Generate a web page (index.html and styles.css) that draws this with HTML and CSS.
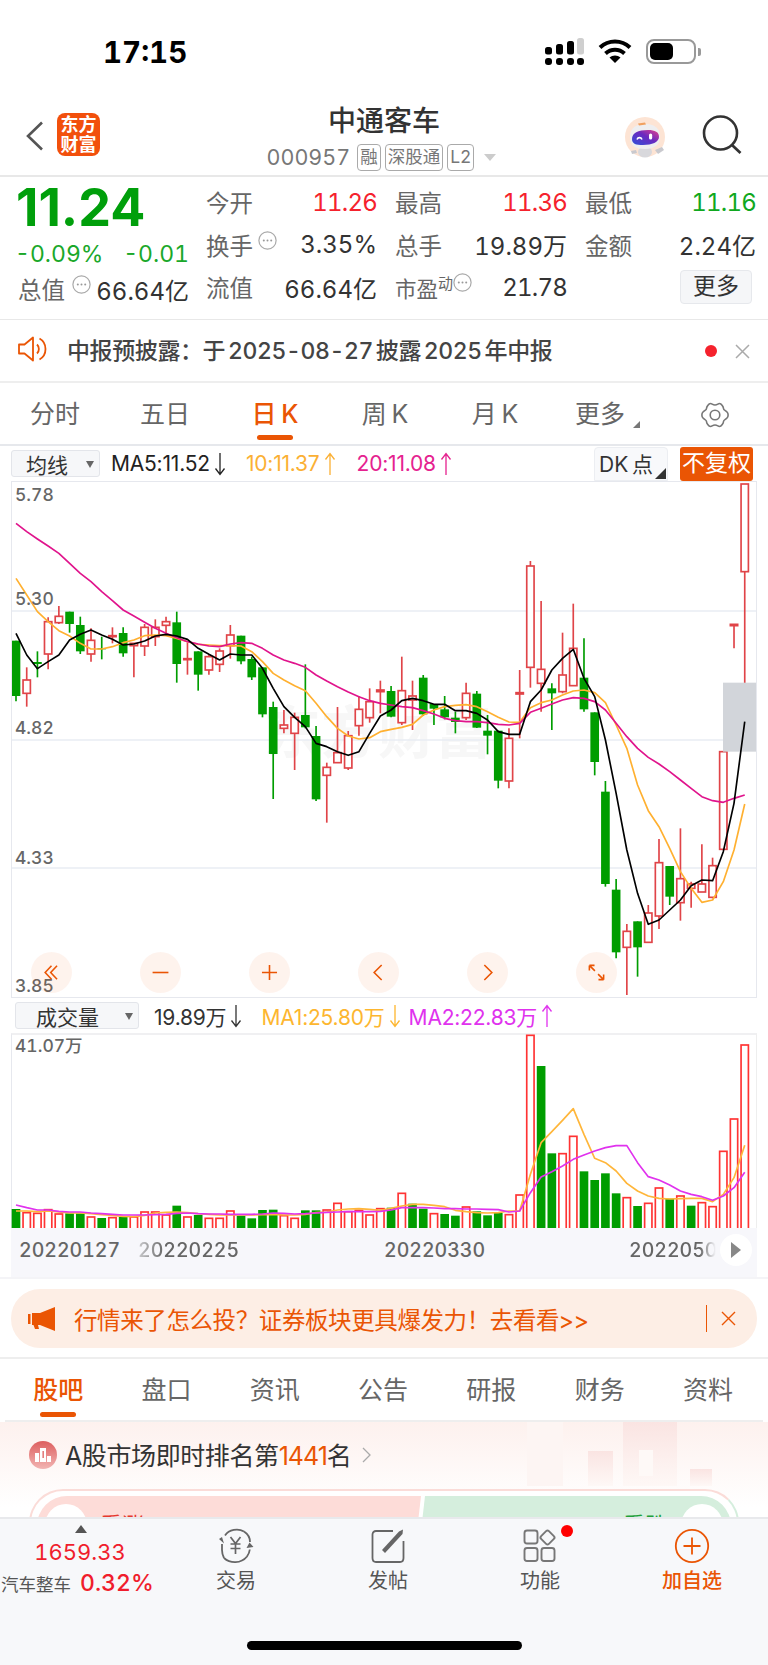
FILE: index.html
```html
<!DOCTYPE html>
<html>
<head>
	<meta charset="utf-8">
	<title>中通客车</title>
	<link rel="stylesheet" href="styles.css">
</head>
<body>
	<svg class="defs" width="0" height="0">
		<symbol id="more" viewBox="0 0 19 19">
			<circle cx="9.5" cy="9.5" r="8.6" fill="none" stroke="#a9a9a9" stroke-width="1.2"/>
			<circle cx="5.8" cy="9.5" r="1" fill="#999"/>
			<circle cx="9.5" cy="9.5" r="1" fill="#999"/>
			<circle cx="13.2" cy="9.5" r="1" fill="#999"/>
		</symbol>
		<symbol id="down" viewBox="0 0 14 24">
			<path d="M7 1V22M2.500 16.500L7 22.500L11.500 16.500" fill="none" stroke="currentColor" stroke-width="1.300"/>
		</symbol>
		<symbol id="up" viewBox="0 0 14 24">
			<path d="M7 23V2M2.500 7.500L7 1.500L11.500 7.500" fill="none" stroke="currentColor" stroke-width="1.300"/>
		</symbol>
	</svg>

	<div id="status">
		<div class="time">17:15</div>
		<div class="status-icons">
			<svg class="signal" width="40" height="28" viewBox="0 0 40 28">
				<rect x="0" y="20" width="7" height="7" rx="3"/>
				<rect x="11" y="20" width="7" height="7" rx="3"/>
				<rect x="22" y="20" width="7" height="7" rx="3"/>
				<rect x="32" y="20" width="7" height="7" rx="3"/>
				<rect x="0" y="9" width="7" height="7.5" rx="2.5"/>
				<rect x="11" y="6" width="7" height="10.5" rx="2.5"/>
				<rect x="22" y="3" width="7" height="13.5" rx="2.5"/>
				<rect x="32" y="0" width="7" height="16.5" rx="2.5" fill="#cfcfcf"/>
			</svg>
			<svg class="wifi" width="34" height="24" viewBox="0 0 34 24">
				<path d="M2 8.5C10.500 0.500 23.500 0.500 32 8.500M7.500 14.500C13 9.500 21 9.500 26.500 14.500" fill="none" stroke="#000" stroke-width="4"/>
				<path d="M11.500 18.500C14.500 15.800 19.500 15.800 22.500 18.500L17 24Z"/>
			</svg>
			<div class="battery"><div class="battery-fill"></div></div>
			<div class="battery-cap"></div>
		</div>
	</div>

	<div id="nav">
		<svg class="back" width="19" height="30" viewBox="0 0 19 30">
			<path d="M17 1.500L3 15L17 28.500" fill="none" stroke="#555" stroke-width="2.600"/>
		</svg>
		<div class="logo">东方<br>财富</div>
		<div class="title">
			<h1>中通客车</h1>
			<div class="code">
				<span>000957</span>
				<i class="tag">融</i>
				<i class="tag">深股通</i>
				<i class="tag">L2</i>
				<b class="caret"></b>
			</div>
		</div>
		<svg class="robot" width="42" height="42" viewBox="0 0 42 42">
			<defs>
				<linearGradient id="visor" x1="0" x2="1" y1="1" y2="0">
					<stop offset="0" stop-color="#2f4fd8"/>
					<stop offset="0.55" stop-color="#6a2ac0"/>
					<stop offset="1" stop-color="#e8408a"/>
				</linearGradient>
			</defs>
			<circle cx="21" cy="20" r="20" fill="#fde4d4"/>
			<ellipse cx="21" cy="35" rx="7" ry="5.500" fill="#d8d8dc"/>
			<path d="M31 33l7-3 2 3-6 4zM12 33l-5 1 1 3 5-1z" fill="#c9c9ce"/>
			<path d="M6 20C6 10 13 7 22 7C31 7 36 12 36 20C36 28 30 32 21 32C12 32 6 29 6 20Z" fill="#eeeef0"/>
			<path d="M14 6.500l7-1 1 2-7 1z" fill="#f0a060"/>
			<path d="M8 22C8 16 14 13 24 13C31 13 35 15 35 20C35 25 28 28 19 28C12 28 8 27 8 22Z" fill="url(#visor)"/>
			<path d="M13 22.500c1-2.500 4-2.500 5 0" fill="none" stroke="#fff" stroke-width="1.600"/>
			<rect x="25" y="16.500" width="3.200" height="6" rx="1.600" fill="#fff"/>
		</svg>
		<svg class="search" width="40" height="40" viewBox="0 0 40 40">
			<circle cx="18.500" cy="18" r="16.500" fill="none" stroke="#333" stroke-width="2.600"/>
			<path d="M30 30L38.500 38" stroke="#333" stroke-width="2.800"/>
		</svg>
	</div>

	<div id="quote">
		<div class="quote-main">
			<div class="price">11.24</div>
			<div class="change"><span class="pct">-0.09%</span><span>-0.01</span></div>
			<div class="cap">
				<span class="label">总值</span>
				<svg class="more"><use href="#more"/></svg>
				<span class="value">66.64亿</span>
			</div>
		</div>
		<div class="quote-grid">
			<div class="cell"><span class="label">今开</span><span class="up">11.26</span></div>
			<div class="cell"><span class="label">最高</span><span class="up">11.36</span></div>
			<div class="cell"><span class="label">最低</span><span class="down">11.16</span></div>
			<div class="cell"><span class="label">换手<svg class="more raised"><use href="#more"/></svg></span><span class="value">3.35%</span></div>
			<div class="cell"><span class="label">总手</span><span class="value">19.89万</span></div>
			<div class="cell"><span class="label">金额</span><span class="value">2.24亿</span></div>
			<div class="cell"><span class="label">流值</span><span class="value">66.64亿</span></div>
			<div class="cell"><span class="label pe">市盈<sup>动</sup><svg class="more raised"><use href="#more"/></svg></span><span class="value tight">21.78</span></div>
			<div class="cell cell-end"><div class="more-btn">更多</div></div>
		</div>
	</div>

	<div id="notice">
		<svg class="speaker" width="30" height="26" viewBox="0 0 30 26">
			<path d="M1 8.500H6.500L15 1.500V24.500L6.500 17.500H1Z" fill="none" stroke="#ea5504" stroke-width="1.800" stroke-linejoin="round"/>
			<path d="M19 8.500C21.500 11 21.500 15 19 17.500M21.500 2.500C29.500 7 29.500 19 21.500 23.500" fill="none" stroke="#ea5504" stroke-width="1.800"/>
		</svg>
		<div class="notice-text">中报预披露：于 2025-08-27 披露 2025 年中报</div>
		<b class="notice-dot"></b>
		<svg class="notice-close" width="15" height="15" viewBox="0 0 15 15">
			<path d="M1 1L14 14M14 1L1 14" stroke="#aaa" stroke-width="1.500"/>
		</svg>
	</div>

	<div id="period">
		<div class="tab">分时</div>
		<div class="tab">五日</div>
		<div class="tab active">日 K</div>
		<div class="tab">周 K</div>
		<div class="tab">月 K</div>
		<div class="tab corner">更多</div>
		<div class="tab">
			<svg class="gear" width="30" height="26" viewBox="0 0 30 26">
				<path d="M10.500 1.500C12 1.500 12.500 3 15 3C17.500 3 18 1.500 19.500 1.500C21.500 1.500 23.500 5 23.500 6.500C23.500 8 25.500 8.500 27 10C28.500 11.500 28.500 14.500 27 16C25.500 17.500 23.500 18 23.500 19.500C23.500 21 21.500 24.500 19.500 24.500C18 24.500 17.500 23 15 23C12.500 23 12 24.500 10.500 24.500C8.500 24.500 6.500 21 6.500 19.500C6.500 18 4.500 17.500 3 16C1.500 14.500 1.500 11.500 3 10C4.500 8.500 6.500 8 6.500 6.500C6.500 5 8.500 1.500 10.500 1.500Z" fill="none" stroke="#777" stroke-width="1.600"/>
				<circle cx="15" cy="13" r="4.800" fill="none" stroke="#777" stroke-width="1.600"/>
			</svg>
		</div>
	</div>

	<div id="ma-row">
		<div class="select ma-select">均线<b class="select-caret"></b></div>
		<div class="ma ma5">MA5:11.52<svg class="arrow"><use href="#down"/></svg></div>
		<div class="ma ma10">10:11.37<svg class="arrow"><use href="#up"/></svg></div>
		<div class="ma ma20">20:11.08<svg class="arrow"><use href="#up"/></svg></div>
		<div class="dk">DK 点</div>
		<div class="adjust">不复权</div>
	</div>

	<div id="kline" class="panel">
		<div class="watermark">东方财富</div>
		<svg id="kline-svg" viewBox="36 6 2232 1545"></svg>
		<span class="axis-y" data-y="13">5.78</span>
		<span class="axis-y" data-y="117">5.30</span>
		<span class="axis-y" data-y="246">4.82</span>
		<span class="axis-y" data-y="376">4.33</span>
		<span class="axis-y" data-y="504">3.85</span>
		<div class="tools">
			<div class="tool"><svg viewBox="0 0 24 24"><path d="M12 3.500L4 12L12 20.500M19 3.500L11 12L19 20.500"/></svg></div>
			<div class="tool"><svg viewBox="0 0 24 24"><path d="M2 12H22"/></svg></div>
			<div class="tool"><svg viewBox="0 0 24 24"><path d="M2.500 12H21.500M12 2.500V21.500"/></svg></div>
			<div class="tool"><svg viewBox="0 0 24 24"><path d="M16 2.500L6.500 12L16 21.500"/></svg></div>
			<div class="tool"><svg viewBox="0 0 24 24"><path d="M8 2.500L17.500 12L8 21.500"/></svg></div>
			<div class="tool"><svg viewBox="0 0 24 24"><path d="M3 3L10 10M3 3V9.500M3 3H9.500M21 21L14 14M21 21V14.500M21 21H14.500"/></svg></div>
		</div>
	</div>

	<div id="vol-row">
		<div class="select vol-select">成交量<b class="select-caret"></b></div>
		<div class="ma vol">19.89万<svg class="arrow"><use href="#down"/></svg></div>
		<div class="ma vol1">MA1:25.80万<svg class="arrow"><use href="#down"/></svg></div>
		<div class="ma vol2">MA2:22.83万<svg class="arrow"><use href="#up"/></svg></div>
	</div>

	<div id="volume" class="panel">
		<svg id="vol-svg" viewBox="36 72 2232 579"></svg>
		<span class="axis-y vol-max">41.07万</span>
	</div>
	<div id="dates">
		<span class="date d1">20220127</span>
		<span class="date d2">20220225</span>
		<span class="date d3">20220330</span>
		<span class="date d4">20220505</span>
		<div class="next"><b></b></div>
	</div>

	<div id="banner">
		<div class="pill">
			<svg class="horn" width="28" height="24" viewBox="0 0 28 24">
				<rect x="0" y="7" width="2.500" height="10" fill="#ea5504"/>
				<path d="M4 6H12L27 0V24L12 18H10L11 22H7L5.500 18H4Z" fill="#ea5504"/>
			</svg>
			<div class="pill-text">行情来了怎么投？证券板块更具爆发力！去看看&gt;&gt;</div>
			<i class="pill-bar"></i>
			<svg class="pill-close" width="15" height="15" viewBox="0 0 15 15">
				<path d="M1 1L14 14M14 1L1 14" stroke="#ea5504" stroke-width="1.400"/>
			</svg>
		</div>
	</div>

	<div id="info-tabs">
		<div class="info-tab active">股吧</div>
		<div class="info-tab">盘口</div>
		<div class="info-tab">资讯</div>
		<div class="info-tab">公告</div>
		<div class="info-tab">研报</div>
		<div class="info-tab">财务</div>
		<div class="info-tab">资料</div>
	</div>

	<div id="rank">
		<svg class="rank-bg" width="220" height="64" viewBox="0 0 220 64">
			<defs>
				<linearGradient id="fade" x1="0" x2="0" y1="0" y2="1">
					<stop offset="0" stop-color="#fae4e2"/>
					<stop offset="1" stop-color="#fef8f6"/>
				</linearGradient>
			</defs>
			<rect x="0" y="0" width="36" height="64" fill="#fdf5f3"/>
			<rect x="61" y="29" width="25" height="35" fill="url(#fade)"/>
			<rect x="96" y="0" width="54" height="64" fill="url(#fade)"/>
			<rect x="112" y="28" width="14" height="26" fill="#fef9f7"/>
			<rect x="163" y="47" width="22" height="17" fill="url(#fade)"/>
		</svg>
		<div class="rank-head">
			<svg class="rank-icon" width="28" height="28" viewBox="0 0 28 28">
				<defs>
					<linearGradient id="medal" x1="0" x2="0" y1="0" y2="1">
						<stop offset="0" stop-color="#dd5f5f"/>
						<stop offset="1" stop-color="#f2b5b3"/>
					</linearGradient>
				</defs>
				<circle cx="14" cy="14" r="14" fill="url(#medal)"/>
				<path d="M11 7h6v14h-6zM6 12h4v9H6zM18 15h4v6h-4z" fill="#fff"/>
				<path d="M13.500 10h1.300v7h-1.300z" fill="#dd5f5f"/>
			</svg>
			<div class="rank-text">A股市场即时排名第<em>1441</em>名</div>
			<svg class="rank-go" width="9" height="16" viewBox="0 0 9 16">
				<path d="M1 1L8 8L1 15" fill="none" stroke="#aaa" stroke-width="1.300"/>
			</svg>
		</div>
		<div class="vote">
			<div class="vote-side vote-up"><i></i><span>看涨</span></div>
			<div class="vote-side vote-down"><span>看跌</span><i></i></div>
		</div>
	</div>

	<div id="dock">
		<div class="dock-row">
			<div class="sector">
				<b class="sector-caret"></b>
				<div class="sector-index">1659.33</div>
				<div class="sector-line"><span>汽车整车</span><strong>0.32%</strong></div>
			</div>
			<div class="dock-item">
				<svg width="40" height="36" viewBox="0 0 40 36">
					<path d="M28 3.500C22 0 13 1.500 9 7.500M8 30C14 35.500 25 36 31 28.500C32.500 26.500 33.500 24 33.800 21.500" fill="none" stroke="#666" stroke-width="1.800"/>
					<path d="M28 3.500C32 6 34 10 34 14" fill="none" stroke="#666" stroke-width="1.800"/>
					<path d="M3 11L8 15.500L6 9ZM37.500 19L33.500 14.500L30.500 20Z" fill="#666"/>
					<path d="M6 16V22C6 25 7 28 8 30" fill="none" stroke="#666" stroke-width="1.800"/>
					<path d="M14.500 9L19.500 15.500L24.500 9M19.500 15.500V26M14.500 16H24.500M14.500 20.500H24.500" fill="none" stroke="#666" stroke-width="1.700"/>
				</svg>
				<span>交易</span>
			</div>
			<div class="dock-item">
				<svg width="36" height="36" viewBox="0 0 36 36">
					<path d="M23 3H6C4 3 2.500 4.500 2.500 6.500V30C2.500 32.500 4 34 6 34H30C32 34 33.500 32.500 33.500 30V13" fill="none" stroke="#666" stroke-width="1.800"/>
					<path d="M12 22L29 3.500L33 1.500L32.500 6L15 25Z" fill="#666"/>
				</svg>
				<span>发帖</span>
			</div>
			<div class="dock-item">
				<svg width="36" height="36" viewBox="0 0 36 36">
					<rect x="2.500" y="2.500" width="13" height="13" rx="2.500" fill="none" stroke="#777" stroke-width="1.900"/>
					<rect x="20" y="4" width="11" height="11" rx="2" transform="rotate(45 25.500 9.500)" fill="none" stroke="#777" stroke-width="1.900"/>
					<rect x="2.500" y="20" width="13" height="13" rx="2.500" fill="none" stroke="#777" stroke-width="1.900"/>
					<rect x="19.500" y="20" width="13" height="13" rx="2.500" fill="none" stroke="#777" stroke-width="1.900"/>
				</svg>
				<b class="dock-dot"></b>
				<span>功能</span>
			</div>
			<div class="dock-item dock-add">
				<svg width="36" height="36" viewBox="0 0 36 36">
					<circle cx="18" cy="18" r="16.200" fill="none" stroke="#ea5504" stroke-width="1.800"/>
					<path d="M9.500 18H26.500M18 9.500V26.500" stroke="#ea5504" stroke-width="1.800"/>
				</svg>
				<span>加自选</span>
			</div>
		</div>
		<div class="home-bar"></div>
	</div>

	<script src="chart.js"></script>
</body>
</html>
```

FILE: styles.css
```css
* {
	box-sizing: border-box;
}

html, body {
	margin: 0;
	padding: 0;
	background: #fff;
}

body {
	width: 768px;
	height: 1665px;
	overflow: hidden;
	font-family: Inter, 'Noto Sans CJK SC', sans-serif;
	font-variant-numeric: tabular-nums;
	color: #333;
}

.defs {
	position: absolute;
}

/* status bar */
#status {
	height: 100px;
	display: flex;
	padding: 38px 0 0 103px;
}
.time {
	width: 82px;
	font-size: 29.500px;
	font-weight: 700;
	line-height: 29px;
	color: #000;
	white-space: nowrap;
}
.status-icons {
	display: flex;
	align-items: flex-start;
	margin-left: 360px;
}
.wifi {
	margin: 1px 0 0 13px;
}
.battery {
	width: 50px;
	height: 25px;
	margin: 1px 0 0 14px;
	border: 2px solid #999;
	border-radius: 8px;
	padding: 2px;
}
.battery-fill {
	width: 23px;
	height: 17px;
	background: #000;
	border-radius: 5px;
}
.battery-cap {
	width: 3px;
	height: 8px;
	margin: 10px 0 0 2px;
	background: #999;
	border-radius: 0 2px 2px 0;
}

/* nav */
#nav {
	height: 77px;
	position: relative;
	display: flex;
	border-bottom: 2px solid #e8e8e8;
	padding-left: 25px;
}
.back {
	margin-top: 21px;
}
.logo {
	width: 43px;
	height: 43px;
	margin: 13px 0 0 13px;
	background: #f2500c;
	border-radius: 8px;
	color: #fff;
	font-size: 18px;
	font-weight: 700;
	line-height: 20px;
	text-align: center;
	padding-top: 2px;
	white-space: nowrap;
}
.title {
	position: absolute;
	left: 0;
	right: 0;
	top: 5px;
	text-align: center;
}
.title h1 {
	margin: 0;
	font-size: 28px;
	font-weight: 500;
	line-height: 32px;
	color: #333;
}
.code {
	display: flex;
	align-items: center;
	justify-content: center;
	height: 28px;
	margin-top: 6px;
	color: #777;
	font-size: 21.500px;
	padding-right: 5px;
}
.tag {
	font-style: normal;
	font-size: 17.500px;
	line-height: 24px;
	height: 27px;
	padding: 0 2px;
	margin-left: 4px;
	border: 1px solid #aaa;
	border-radius: 4px;
	color: #777;
}
.code span {
	margin-right: 3px;
}
.caret {
	width: 0;
	height: 0;
	margin-left: 10px;
	border-left: 6px solid transparent;
	border-right: 6px solid transparent;
	border-top: 7px solid #ccc;
}
.robot {
	position: absolute;
	left: 624px;
	top: 17px;
}
.search {
	position: absolute;
	left: 702px;
	top: 15px;
}

/* quote */
#quote {
	height: 143px;
	display: flex;
	border-bottom: 1px solid #e8e8e8;
	padding: 3px 0 0 18px;
}
.quote-main {
	width: 171px;
	margin-right: 17px;
}
.price {
	height: 59px;
	margin-left: -2px;
	font-size: 52px;
	font-weight: 700;
	line-height: 55px;
	color: #009f0b;
	font-variant-numeric: normal;
}
.change {
	display: flex;
	justify-content: space-between;
	height: 30px;
	font-size: 23px;
	line-height: 30px;
	color: #1aa82a;
}
.pct {
	margin-left: -3px;
}
.cap {
	display: flex;
	align-items: center;
	height: 40px;
}
.cap .value {
	margin-left: auto;
}
.label {
	color: #666;
	font-size: 23.500px;
	white-space: nowrap;
}
.value {
	color: #333;
	font-size: 24px;
	white-space: nowrap;
}
.tight {
	letter-spacing: -0.8px;
}
.more {
	width: 19px;
	height: 19px;
	margin: -10px 0 0 7px;
}
.more.raised {
	vertical-align: 5px;
	margin: 0 0 0 5px;
}
.quote-grid {
	display: grid;
	grid-template-columns: 171px 172px 171px;
	grid-auto-rows: 42.500px;
	column-gap: 18px;
	margin-top: 1px;
}
.cell {
	display: flex;
	align-items: center;
	justify-content: space-between;
	font-size: 24px;
}
.cell-end {
	justify-content: flex-end;
	padding-right: 4px;
}
.up {
	color: #f5222d;
	letter-spacing: -0.8px;
}
.down {
	color: #10a820;
	letter-spacing: -0.8px;
}
.pe {
	font-size: 21.500px;
}
.pe sup {
	font-size: 15px;
	line-height: 0;
}
.pe .more.raised {
	margin-left: 0;
}
.more-btn {
	width: 72px;
	height: 34px;
	line-height: 31px;
	text-align: center;
	background: #f5f6f8;
	border: 1px solid #e6e8ec;
	border-radius: 4px;
	font-size: 23px;
	color: #333;
}

/* notice */
#notice {
	height: 63px;
	display: flex;
	align-items: center;
	padding: 0 0 3px 18px;
	border-bottom: 2px solid #eeeeee;
}
.notice-text {
	margin-left: 19px;
	font-size: 23px;
	font-weight: 500;
	color: #444;
	white-space: nowrap;
	letter-spacing: -0.4px;
	word-spacing: -3px;
}
.notice-dot {
	position: absolute;
	left: 705px;
	top: 345px;
	width: 12px;
	height: 12px;
	background: #f5222d;
	border-radius: 50%;
}
.notice-close {
	position: absolute;
	left: 735px;
	top: 344px;
}

/* period tabs */
#period {
	height: 63px;
	display: grid;
	grid-template-columns: repeat(7, 110px);
	border-bottom: 2px solid #e6e8ec;
}
.tab {
	position: relative;
	text-align: center;
	font-size: 25px;
	line-height: 63px;
	color: #666;
	white-space: nowrap;
	word-spacing: -2px;
}
.tab.active {
	color: #ea5504;
	font-weight: 500;
}
.tab.active::after {
	content: '';
	position: absolute;
	left: 37px;
	top: 52px;
	width: 36px;
	height: 5px;
	background: #ea5504;
	border-radius: 3px;
}
.tab.corner {
	padding-right: 10px;
}
.tab.corner::after {
	content: '';
	position: absolute;
	left: 83px;
	top: 38px;
	border-left: 7px solid transparent;
	border-bottom: 7px solid #777;
}
.gear {
	margin-top: 19px;
	vertical-align: top;
}

/* MA legends */
#ma-row, #vol-row {
	height: 35px;
	position: relative;
	display: flex;
	align-items: center;
	font-size: 21px;
}
.ma {
	display: flex;
	align-items: center;
	white-space: nowrap;
	letter-spacing: -0.2px;
	font-variant-numeric: normal;
}
.arrow {
	width: 14px;
	height: 24px;
	margin-left: 3px;
}
.select {
	position: relative;
	display: flex;
	align-items: center;
	padding-left: 14px;
	height: 27px;
	background: #f6f7f9;
	border: 1px solid #e3e5ea;
	border-radius: 3px;
	color: #333;
	font-size: 21px;
}
.ma-select {
	width: 89px;
	margin-left: 11px;
}
.vol-select {
	width: 124px;
	margin-left: 15px;
	padding-left: 20px;
}
.select-caret {
	position: absolute;
	right: 5px;
	top: 10px;
	border-left: 4px solid transparent;
	border-right: 4px solid transparent;
	border-top: 7px solid #666;
}
.ma5 {
	margin-left: 11px;
	color: #222;
}
.ma10 {
	margin-left: 19px;
	color: #fbb034;
}
.ma20 {
	margin-left: 20px;
	color: #e5228f;
}
.dk {
	position: absolute;
	left: 594px;
	top: 1px;
	width: 74px;
	height: 34px;
	padding-left: 4px;
	line-height: 33px;
	border: 1px solid #eceef2;
	border-radius: 4px 4px 0 0;
	background: #f8f9fb;
	white-space: nowrap;
	color: #333;
	word-spacing: -2px;
}
.dk::after {
	content: '';
	position: absolute;
	right: 1px;
	bottom: 1px;
	border-left: 11px solid transparent;
	border-bottom: 11px solid #333;
}
.adjust {
	position: absolute;
	left: 680px;
	top: 1px;
	width: 73px;
	height: 34px;
	line-height: 33px;
	text-align: center;
	background: #ea5504;
	border-radius: 3px;
	color: #fff;
	white-space: nowrap;
	font-size: 23px;
}

/* chart panels */
.panel {
	position: relative;
	width: 746px;
	margin-left: 11px;
	background: #fff;
}
#kline {
	height: 517px;
	border: 1px solid #e6e8ee;
}
#kline-svg {
	position: absolute;
	left: 0;
	top: 0;
	width: 744px;
	height: 515px;
}
.watermark {
	position: absolute;
	left: 252px;
	top: 216px;
	font-size: 57px;
	font-weight: 700;
	line-height: 70px;
	color: #f7f7f7;
	white-space: nowrap;
}
.axis-y {
	position: absolute;
	left: 3px;
	font-size: 17.500px;
	line-height: 20px;
	color: #666;
	font-weight: 500;
}
.tools {
	position: absolute;
	left: 19px;
	top: 470px;
	display: flex;
	gap: 68px;
}
.tool {
	display: flex;
	align-items: center;
	justify-content: center;
	width: 41px;
	height: 41px;
	border-radius: 50%;
	background: rgba(234, 85, 4, 0.07);
}
.tool svg {
	width: 19px;
	height: 19px;
	fill: none;
	stroke: #ea5504;
	stroke-width: 2;
}
.vol {
	margin-left: 15px;
	color: #333;
}
.vol1 {
	margin-left: 18px;
	color: #fdb62f;
}
.vol2 {
	margin-left: 7px;
	color: #e032ee;
}
#volume {
	height: 195px;
	border-top: 2px solid #f0f0f2;
	border-left: 1px solid #e6e8ee;
	border-right: 1px solid #eeeeee;
}
#vol-svg {
	position: absolute;
	left: 0;
	top: 0;
	width: 744px;
	height: 193px;
	overflow: visible;
}
.vol-max {
	top: 0;
	line-height: 22px;
}
#dates {
	position: relative;
	width: 746px;
	height: 49px;
	margin-left: 11px;
	background: #f7f7fb;
}
.date {
	position: absolute;
	top: 11px;
	font-size: 19.500px;
	font-weight: 500;
	line-height: 22px;
	color: #666;
}
.d1 {
	left: 8px;
}
.d2 {
	left: 127px;
	-webkit-mask-image: linear-gradient(to right, rgba(0, 0, 0, 0.3), #000 26%);
	mask-image: linear-gradient(to right, rgba(0, 0, 0, 0.3), #000 26%);
}
.d3 {
	left: 373px;
}
.d4 {
	left: 618px;
	-webkit-mask-image: linear-gradient(to right, #000 70%, transparent 86%);
	mask-image: linear-gradient(to right, #000 70%, transparent 86%);
}
.next {
	position: absolute;
	left: 709px;
	top: 6px;
	width: 32px;
	height: 32px;
	background: #fff;
	border-radius: 50%;
}
.next b {
	position: absolute;
	left: 11px;
	top: 8px;
	border-top: 8px solid transparent;
	border-bottom: 8px solid transparent;
	border-left: 10px solid #888;
}

/* banner */
#banner {
	height: 82px;
	padding: 10px 11px 0;
	border-top: 2px solid #f4f4f7;
	border-bottom: 2px solid #eeeeee;
}
.pill {
	position: relative;
	display: flex;
	align-items: center;
	height: 59px;
	padding-left: 17px;
	background: #fdeee5;
	border-radius: 29px;
}
.pill-text {
	margin-left: 18px;
	font-size: 23.500px;
	color: #ea5504;
	white-space: nowrap;
	letter-spacing: -0.4px;
}
.pill-bar {
	position: absolute;
	left: 695px;
	top: 16px;
	width: 1px;
	height: 27px;
	background: #ea5504;
}
.pill-close {
	position: absolute;
	left: 710px;
	top: 22px;
}

/* info tabs */
#info-tabs {
	height: 63px;
	display: flex;
	padding-left: 4px;
	position: relative;
}
#info-tabs::after {
	content: '';
	position: absolute;
	left: 5px;
	right: 5px;
	bottom: 0;
	height: 2px;
	background: #eeeeee;
}
.info-tab {
	position: relative;
	width: 108.300px;
	text-align: center;
	font-size: 25px;
	line-height: 63px;
	color: #666;
}
.info-tab.active {
	color: #ea5504;
	font-weight: 500;
}
.info-tab.active::after {
	content: '';
	position: absolute;
	left: 36px;
	top: 53px;
	width: 36px;
	height: 5px;
	background: #ea5504;
	border-radius: 3px;
}

/* rank */
#rank {
	position: relative;
	height: 95px;
	overflow: hidden;
	padding: 19px 29px 0;
	background: linear-gradient(#fdf1ee, #fff 90%);
}
.rank-bg {
	position: absolute;
	left: 527px;
	top: 0;
}
.rank-head {
	position: relative;
	display: flex;
	align-items: center;
	height: 28px;
}
.rank-text {
	margin-top: -3px;
	margin-left: 8px;
	font-size: 25px;
	white-space: nowrap;
	color: #333;
	letter-spacing: -0.4px;
}
.rank-text em {
	font-style: normal;
	font-variant-numeric: normal;
	letter-spacing: -1px;
	color: #ea5504;
}
.rank-go {
	margin-left: 11px;
}
.vote {
	position: relative;
	display: flex;
	height: 80px;
	margin-top: 20px;
	padding: 5px 6px;
	background: #fff;
	border: 2px solid #fbdcd8;
	border-right-color: #d5eedd;
	border-radius: 34px;
}
.vote-side {
	display: flex;
	height: 70px;
	padding: 8px 16px;
	font-size: 22px;
	line-height: 30px;
}
.vote-side i {
	width: 42px;
	height: 42px;
	background: #fff;
	border-radius: 50%;
}
.vote-side span {
	margin-top: 6px;
}
.vote-up {
	width: 384px;
	background: #fddcd8;
	border-radius: 30px 0 0 30px;
	clip-path: polygon(0 0, 100% 0, calc(100% - 8px) 100%, 0 100%);
	color: #e53a2f;
	gap: 13px;
	padding-left: 8px;
}
.vote-down {
	flex: 1;
	margin-left: -4px;
	justify-content: flex-end;
	background: #d5eedd;
	border-radius: 0 30px 30px 0;
	clip-path: polygon(8px 0, 100% 0, 100% 100%, 0 100%);
	color: #22a03a;
	gap: 14px;
	padding-right: 8px;
}

/* dock */
#dock {
	height: 148px;
	background: #f7f8fa;
	border-top: 2px solid #e8e9ec;
}
.dock-row {
	display: flex;
	height: 122px;
}
.sector {
	position: relative;
	width: 160px;
	padding-top: 6px;
	text-align: center;
}
.sector-caret {
	display: block;
	width: 0;
	margin: 0 0 0 75px;
	border-left: 6px solid transparent;
	border-right: 6px solid transparent;
	border-bottom: 8px solid #555;
}
.sector-index {
	margin-top: 4px;
	width: 160px;
	font-size: 22px;
	line-height: 30px;
	color: #f01d2c;
}
.sector-line {
	display: flex;
	align-items: center;
	height: 32px;
	margin-left: 1px;
	white-space: nowrap;
}
.sector-line span {
	font-size: 17.500px;
	color: #555;
}
.sector-line strong {
	margin-left: 9px;
	font-size: 23px;
	font-weight: 500;
	color: #f01d2c;
}
.dock-item {
	position: relative;
	width: 152px;
	padding-top: 9px;
	text-align: center;
}
.dock-item svg {
	display: block;
	margin: 0 auto;
}
.dock-item span {
	display: block;
	margin-top: 3px;
	font-size: 20px;
	line-height: 28px;
	color: #555;
}
.dock-dot {
	position: absolute;
	left: 97px;
	top: 6px;
	width: 12px;
	height: 12px;
	background: #f00;
	border-radius: 50%;
}
.dock-add span {
	color: #ea5504;
	font-weight: 500;
}
.home-bar {
	width: 275px;
	height: 9px;
	margin: 0 0 0 247px;
	background: #000;
	border-radius: 5px;
}
```

FILE: chart.js
```js
// all y values below are in 3x chart units (1px = 3 units)
var STEP = 32.15;
var NS = 'http://www.w3.org/2000/svg';

function xAt(i) {
	return 48 + STEP * i;
}

// colour, high, body top, body bottom, low
var candles = [
	['g',482,482,648,664],['r',562,600,640,680],['g',514,546,552,592],['r',412,425,522,568],['r',378,409,428,432],
	['g',395,395,432,458],['g',410,435,514,522],['r',445,481,522,545],['g',470,505,508,538],['r',442,467,470,490],
	['g',442,459,520,530],['r',490,490,497,592],['r',432,442,498,528],['r',418,442,470,498],['r',410,425,436,460],
	['g',395,427,552,608],['r',488,536,539,584],['g',514,514,584,632],['r',525,530,570,584],['r',505,513,553,576],
	['r',435,465,497,536],['g',467,467,544,553],['g',530,537,592,600],['g',562,562,703,712],['g',665,681,822,957],
	['r',690,735,745,760],['r',698,712,760,870],['g',553,705,742,745],['g',738,768,958,963],['r',848,862,886,1028],
	['r',681,818,848,848],['r',753,767,864,870],['r',648,688,737,767],['r',625,665,713,728],['r',602,630,635,700],
	['g',618,633,710,712],['r',530,632,728,735],['r',602,648,660,750],['g',585,593,703,708],['g',672,672,686,735],
	['g',648,688,712,718],['g',695,713,726,760],['r',608,640,713,720],['g',633,641,743,744],['g',705,752,767,823],
	['g',752,752,902,925],['r',745,775,903,925],['r',570,638,642,775],['r',243,258,562,623],['r',363,568,610,695],
	['g',610,625,640,750],['r',458,585,635,640],['r',371,505,617,617],['g',475,593,688,695],['g',697,697,846,886],
	['g',903,935,1212,1220],['g',1197,1229,1417,1435],['r',1332,1354,1402,1545],['g',1324,1324,1402,1490],['r',1275,1299,1387,1387],
	['r',1077,1148,1308,1347],['g',1158,1158,1250,1275],['r',1045,1196,1268,1322],['r',1205,1212,1225,1283],['r',1093,1212,1236,1236],
	['r',1133,1157,1252,1255],['r',815,815,1108,1108],['r',433,433,437,505],['r',12,12,275,700]
];

var ma5 = [460,525,566,545,525,480,463,450,465,478,495,492,483,468,463,468,478,505,523,540,522,525,525,565,625,680,712,740,790,800,815,826,815,760,708,690,662,655,662,673,673,692,692,700,720,755,763,763,665,630,570,535,508,595,650,780,940,1110,1240,1333,1320,1290,1260,1217,1200,1202,1115,970,725];
var ma10 = [295,345,395,425,452,468,490,507,507,500,488,480,467,465,467,475,485,493,495,497,497,498,515,545,580,600,617,632,670,710,745,768,777,773,755,748,742,733,705,690,680,676,674,680,695,712,726,727,683,668,660,645,633,630,638,668,735,805,915,992,1040,1105,1175,1225,1267,1260,1205,1110,972];
var ma20 = [130,155,177,198,220,250,280,305,335,362,390,408,427,445,460,473,485,492,498,500,492,488,490,505,525,540,550,562,585,603,620,636,650,662,670,675,680,683,692,702,715,722,725,725,728,733,735,730,697,685,672,660,653,655,665,690,730,770,805,832,852,875,900,925,950,962,967,955,945];

// colour + bar top, bottoms all sit on 654
var bars = [
	'g594','r605','r607','r596','r609','g607','g607','r618','g621','r620','g618','r618','r603','r603','r612','g584','r618','g612','r622','r622',
	'r600','g614','g622','g597','g596','r614','r622','g598','g598','r597','r577','r602','r598','r612','r593','g590','r547','g578','g593','r608',
	'g609','g614','r588','g601','g613','g606','r611','r552','r73','g165','g427','r428','r376','g481','g507','g487','g547','r560','g585','r577',
	'r531','g563','r555','g584','r575','r587','r421','r324','r102'
];
var vol1 = [600,600,602,600,603,606,606,608,611,613,616,617,613,606,604,603,605,608,610,612,612,612,612,611,610,612,612,610,605,603,597,594,593,595,598,592,585,580,580,583,587,598,602,605,606,605,600,600,490,395,362,328,293,370,442,455,480,517,540,555,562,564,563,562,562,572,550,500,403];
var vol2 = [582,590,597,597,601,603,603,606,608,610,612,612,612,611,610,607,606,608,609,609,610,610,610,609,606,607,609,608,606,604,603,602,602,602,601,597,590,590,590,591,593,593,594,594,595,596,603,600,545,498,482,465,445,432,420,410,404,404,455,497,507,522,540,550,557,568,555,530,484];

function el(svg, name, attrs) {
	var node = document.createElementNS(NS, name);
	for (var key in attrs) node.setAttribute(key, attrs[key]);
	svg.appendChild(node);
	return node;
}

function line(svg, values, color) {
	var points = values.map(function (y, i) { return xAt(i).toFixed(1) + ',' + y; }).join(' ');
	el(svg, 'polyline', { points: points, fill: 'none', stroke: color, 'stroke-width': 5, 'stroke-linejoin': 'round' });
}

function drawKline() {
	var svg = document.getElementById('kline-svg');
	[393, 780, 1164].forEach(function (y) {
		el(svg, 'line', { x1: 36, x2: 2268, y1: y, y2: y, stroke: '#e8ecf3', 'stroke-width': 4 });
	});
	candles.forEach(function (c, i) {
		var x = xAt(i);
		var color = c[0] === 'r' ? '#e04448' : '#009d00';
		el(svg, 'line', { x1: x, x2: x, y1: c[1], y2: c[4], stroke: color, 'stroke-width': 5 });
		if (c[0] === 'r') {
			el(svg, 'rect', { x: x - 11, y: c[2], width: 22, height: c[3] - c[2], fill: '#fff', stroke: color, 'stroke-width': 5 });
		} else {
			el(svg, 'rect', { x: x - 13, y: c[2], width: 26, height: c[3] - c[2], fill: color });
		}
	});
	el(svg, 'rect', { x: 2169, y: 608, width: 99, height: 207, fill: '#d2d5da' });
	line(svg, ma10, '#ffb030');
	line(svg, ma20, '#e0148c');
	line(svg, ma5, '#000');
}

function drawVolume() {
	var svg = document.getElementById('vol-svg');
	bars.forEach(function (bar, i) {
		var x = xAt(i);
		var top = parseInt(bar.slice(1), 10);
		if (i >= 11 && i <= 65) {
			var major = i === 16 || i === 39 || i === 62;
			el(svg, 'line', { x1: x, x2: x, y1: 654, y2: major ? 680 : 668, stroke: major ? '#999' : '#c4c4c8', 'stroke-width': major ? 4 : 3 });
		}
		if (bar[0] === 'r') {
			el(svg, 'rect', { x: x - 11, y: top, width: 22, height: 654 - top, fill: '#fff', stroke: '#ff3333', 'stroke-width': 5 });
		} else {
			el(svg, 'rect', { x: x - 13, y: top, width: 26, height: 654 - top, fill: '#009d00' });
		}
	});
	line(svg, vol1, '#ffb63a');
	line(svg, vol2, '#e032ee');
}

function placeLabels() {
	var labels = document.querySelectorAll('#kline .axis-y');
	for (var i = 0; i < labels.length; i++) {
		labels[i].style.top = labels[i].getAttribute('data-y') - 10 + 'px';
	}
}

drawKline();
drawVolume();
placeLabels();
```
